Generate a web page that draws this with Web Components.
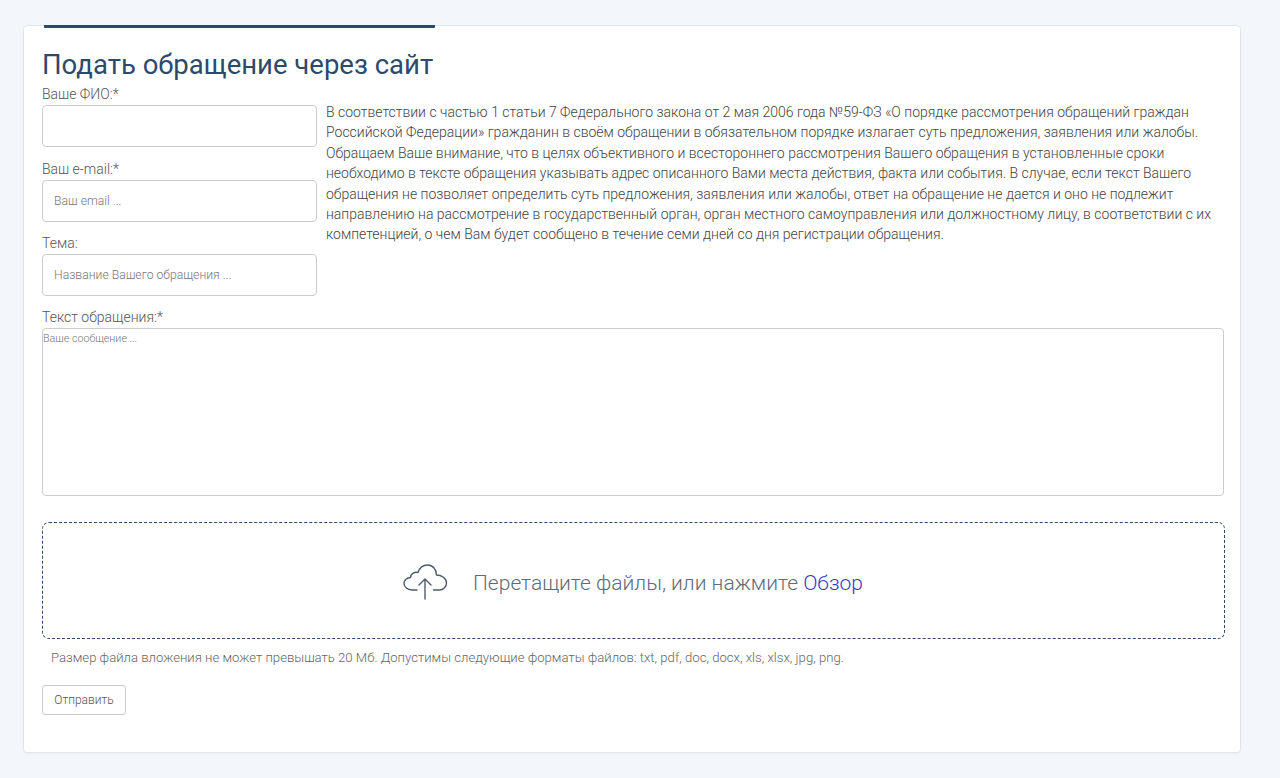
<!DOCTYPE html>
<html lang="ru"><head><meta charset="utf-8"><title>Подать обращение</title>
<style>
html,body{margin:0;padding:0;background:#f3f6fb;font-family:Roboto,"Liberation Sans",sans-serif;}
body{height:778px;overflow:hidden;padding:25px 39px 0 23px;box-sizing:border-box;}
</style></head><body>
<appeal-card>
<h-title slot="title">Подать обращение через сайт</h-title>
<form-field label="Ваше ФИО:*" slot="fields"></form-field>
<form-field label="Ваш e-mail:*" placeholder="Ваш email ..." slot="fields"></form-field>
<form-field label="Тема:" placeholder="Название Вашего обращения ..." slot="fields"></form-field>
<span slot="notice">В соответствии с частью 1 статьи 7 Федерального закона от 2 мая 2006 года №59-ФЗ «О порядке рассмотрения обращений граждан Российской Федерации» гражданин в своём обращении в обязательном порядке излагает суть предложения, заявления или жалобы. Обращаем Ваше внимание, что в целях объективного и всестороннего рассмотрения Вашего обращения в установленные сроки необходимо в тексте обращения указывать адрес описанного Вами места действия, факта или события. В случае, если текст Вашего обращения не позволяет определить суть предложения, заявления или жалобы, ответ на обращение не дается и оно не подлежит направлению на рассмотрение в государственный орган, орган местного самоуправления или должностному лицу, в соответствии с их компетенцией, о чем Вам будет сообщено в течение семи дней со дня регистрации обращения.</span>
<text-field slot="message" label="Текст обращения:*" placeholder="Ваше сообщение ..."></text-field>
<drop-zone slot="drop"></drop-zone>
</appeal-card>
<script>
function def(name, html, init){
  customElements.define(name, class extends HTMLElement{
    constructor(){super();this.attachShadow({mode:'open'}).innerHTML=html;}
    connectedCallback(){ if(init) init(this); }
  });
}
def('h-title',`<style>:host{display:block;color:#2c4a6b;font-size:27.5px;line-height:34px;font-weight:400}</style><slot></slot>`);
def('form-field',`<style>
:host{display:block;margin-bottom:14.5px}
label{display:block;font-size:14px;line-height:15px;color:#555;font-weight:300;margin-bottom:3px}
input{display:block;box-sizing:border-box;width:100%;height:42px;border:1px solid #ccc;border-radius:4px;background:#fff;padding:0 11px;font:300 12.200px Roboto,sans-serif;outline:0}
input::placeholder{color:#777;opacity:1}
</style><label></label><input>`,h=>{
  h.shadowRoot.querySelector('label').textContent=h.getAttribute('label');
  h.shadowRoot.querySelector('input').placeholder=h.getAttribute('placeholder')||'';
});
def('text-field',`<style>
:host{display:block}
label{display:block;font-size:14px;line-height:15px;color:#555;font-weight:300;margin-bottom:3px}
textarea{display:block;box-sizing:border-box;width:calc(100% - 1px);height:168px;border:1px solid #ccc;border-radius:4px;background:#fff;padding:3px 0 0 0;font:300 10.700px/13px Roboto,sans-serif;resize:none;outline:0}
textarea::placeholder{color:#777;opacity:1}
</style><label></label><textarea></textarea>`,h=>{
  h.shadowRoot.querySelector('label').textContent=h.getAttribute('label');
  h.shadowRoot.querySelector('textarea').placeholder=h.getAttribute('placeholder');
});
def('drop-zone',`<style>
:host{display:flex;box-sizing:border-box;height:117px;align-items:center;justify-content:center;gap:25px;border:1px dashed #2c4a6b;border-radius:7px;padding:4px 1px 0 0;color:#5f6b7a;font-size:21px;font-weight:300}
svg{display:block;flex:none;margin-top:-3px}
a{color:#3a36c8}
</style>
<svg width="45" height="38" viewBox="0 0 45 38" fill="none" stroke="#4e5b6b" stroke-width="1.4" stroke-linecap="round" stroke-linejoin="round">
<path d="M14 28H9C4.500 28 1 25 1 21.500 1 18 4 15.500 7.500 15.500 8 11.500 11.500 9.500 15 10.500 16.500 6 20 3 24.500 3 30 3 33.500 7.500 33.500 13 38.500 13 43.500 16.500 43.500 21 43.500 25 40 28 36.500 28H30.500"/>
<path d="M22 37V17M16 23l6-6 6 6"/></svg>
<span>Перетащите файлы, или нажмите <a>Обзор</a></span>`);
def('appeal-card',`<style>
:host{display:block;box-sizing:border-box;width:1218px;height:727.500px;background:#fff;border:1px solid #e2e5ea;border-radius:4px;padding:0 15px 0 18px;box-shadow:0 1px 2px rgba(0,0,0,.03)}
.bar{height:3px;width:391px;margin:-1px 0 0 2px;background:#2c4a6b;border-radius:0 0 1px 1px}
.head{margin-top:20px;margin-bottom:5px}
.cols{display:grid;grid-template-columns:275px 1fr;column-gap:9px;height:223px}
.notice{font-size:14px;line-height:20.4px;color:#444;font-weight:300;padding-top:15px}
.drop{margin-top:26px}
.note{margin:11px 0 0 9px;font-size:13.150px;line-height:15px;color:#666;font-weight:300}
button{display:block;margin-top:20px;box-sizing:border-box;width:84px;height:30px;background:#fff;border:1px solid #ccc;border-radius:3px;font:300 12px Roboto,sans-serif;color:#555;padding:0}
</style>
<div class="bar"></div>
<div class="head"><slot name="title"></slot></div>
<div class="cols"><div><slot name="fields"></slot></div><div class="notice"><slot name="notice"></slot></div></div>
<div class="msg"><slot name="message"></slot></div>
<div class="drop"><slot name="drop"></slot></div>
<div class="note">Размер файла вложения не может превышать 20 Мб. Допустимы следующие форматы файлов: txt, pdf, doc, docx, xls, xlsx, jpg, png.</div>
<button type="button">Отправить</button>`);
</script>
</body></html>
